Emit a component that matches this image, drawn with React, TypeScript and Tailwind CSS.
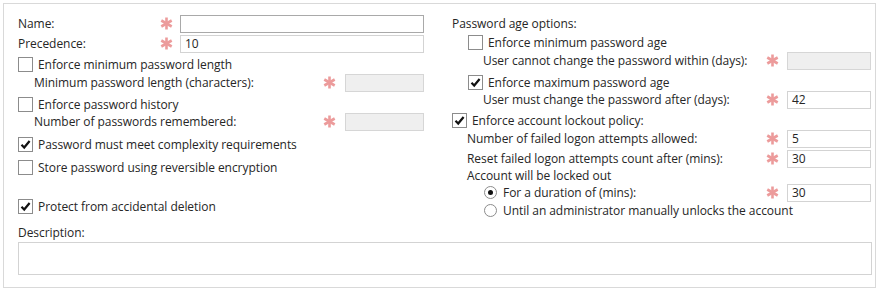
import React from "react";

const Ast = () => (
  <svg width="13" height="13" viewBox="0 0 13 13" className="shrink-0">
    <g stroke="#ec9b9b" strokeWidth="2.6" strokeLinecap="butt">
      <line x1="6.5" y1="0.5" x2="6.5" y2="12.5" />
      <line x1="1.3" y1="3.5" x2="11.7" y2="9.5" />
      <line x1="1.3" y1="9.5" x2="11.7" y2="3.5" />
    </g>
  </svg>
);

const Box = ({ checked }: { checked?: boolean }) => (
  <span className="w-[15px] h-[15px] shrink-0 border border-[#8c8c8c] bg-white flex items-center justify-center">
    {checked && (
      <svg width="13" height="13" viewBox="0 0 13 13">
        <path d="M2.5 6.8 L5.2 9.5 L10.6 3" fill="none" stroke="#111" strokeWidth="2.2" />
      </svg>
    )}
  </span>
);

const Radio = ({ checked }: { checked?: boolean }) => (
  <span className="w-[13px] h-[13px] shrink-0 rounded-full border border-[#8c8c8c] bg-white flex items-center justify-center">
    {checked && <span className="w-[5px] h-[5px] rounded-full bg-[#111]" />}
  </span>
);

const Input = ({
  value,
  disabled,
  dark,
  w,
}: {
  value?: string;
  disabled?: boolean;
  dark?: boolean;
  w: string;
}) => (
  <div
    className={`${w} h-[18px] shrink-0 border px-[4px] flex items-center text-[12px] leading-none ${
      disabled
        ? "bg-[#efefef] border-[#d6d6d6]"
        : dark
        ? "bg-white border-[#a9a9a9]"
        : "bg-white border-[#d3d3d3]"
    }`}
  >
    {value}
  </div>
);

export default function App() {
  return (
    <div className="w-[882px] h-[292px] bg-white pt-[3px] pl-[3px] font-['Open_Sans',sans-serif] text-[12px] tracking-[-0.05px] text-[#262626] leading-none">
      <div className="w-[873px] h-[285px] border border-[#d9d9d9] bg-white pt-[11px] pl-[14px] pr-[3px]">
        <div className="grid grid-cols-[406px_419px] gap-x-[28px] items-start">
          {/* Left column */}
          <div className="flex flex-col">
            <div className="h-[17px] flex items-center">
              <span className="flex-1">Name:</span>
              <Ast />
              <div className="ml-[7px]">
                <Input w="w-[244px]" dark />
              </div>
            </div>
            <div className="h-[17px] mt-[3px] flex items-center">
              <span className="flex-1">Precedence:</span>
              <Ast />
              <div className="ml-[7px]">
                <Input w="w-[244px]" value="10" />
              </div>
            </div>
            <div className="h-[17px] mt-[4px] flex items-center gap-[5px]">
              <Box />
              <span>Enforce minimum password length</span>
            </div>
            <div className="h-[17px] mt-[1px] pl-[16px] flex items-center">
              <span className="flex-1">Minimum password length (characters):</span>
              <Ast />
              <div className="ml-[9px]">
                <Input w="w-[79px]" disabled />
              </div>
            </div>
            <div className="h-[17px] mt-[5px] flex items-center gap-[5px]">
              <Box />
              <span>Enforce password history</span>
            </div>
            <div className="h-[17px] mt-[0px] pl-[16px] flex items-center">
              <span className="flex-1">Number of passwords remembered:</span>
              <Ast />
              <div className="ml-[9px]">
                <Input w="w-[79px]" disabled />
              </div>
            </div>
            <div className="h-[17px] mt-[6px] flex items-center gap-[5px]">
              <Box checked />
              <span>Password must meet complexity requirements</span>
            </div>
            <div className="h-[17px] mt-[6px] flex items-center gap-[5px]">
              <Box />
              <span>Store password using reversible encryption</span>
            </div>
            <div className="h-[17px] mt-[22px] flex items-center gap-[5px]">
              <Box checked />
              <span>Protect from accidental deletion</span>
            </div>
          </div>

          {/* Right column */}
          <div className="flex flex-col">
            <div className="h-[17px] flex items-center">Password age options:</div>
            <div className="h-[17px] mt-[2px] pl-[16px] flex items-center gap-[5px]">
              <Box />
              <span>Enforce minimum password age</span>
            </div>
            <div className="h-[17px] mt-[1px] pl-[31px] flex items-center">
              <span className="flex-1">User cannot change the password within (days):</span>
              <Ast />
              <div className="ml-[8px]">
                <Input w="w-[84px]" disabled />
              </div>
            </div>
            <div className="h-[17px] mt-[5px] pl-[16px] flex items-center gap-[5px]">
              <Box checked />
              <span>Enforce maximum password age</span>
            </div>
            <div className="h-[17px] mt-[0px] pl-[31px] flex items-center">
              <span className="flex-1">User must change the password after (days):</span>
              <Ast />
              <div className="ml-[8px]">
                <Input w="w-[84px]" value="42" />
              </div>
            </div>
            <div className="h-[17px] mt-[4px] flex items-center gap-[5px]">
              <Box checked />
              <span>Enforce account lockout policy:</span>
            </div>
            <div className="h-[17px] mt-[1px] pl-[15px] flex items-center">
              <span className="flex-1">Number of failed logon attempts allowed:</span>
              <Ast />
              <div className="ml-[8px]">
                <Input w="w-[84px]" value="5" />
              </div>
            </div>
            <div className="h-[17px] mt-[3px] pl-[15px] flex items-center">
              <span className="flex-1">Reset failed logon attempts count after (mins):</span>
              <Ast />
              <div className="ml-[8px]">
                <Input w="w-[84px]" value="30" />
              </div>
            </div>
            <div className="h-[17px] mt-[0px] pl-[15px] flex items-center">
              Account will be locked out
            </div>
            <div className="h-[17px] mt-[0px] pl-[32px] flex items-center">
              <Radio checked />
              <span className="flex-1 ml-[6px]">For a duration of (mins):</span>
              <Ast />
              <div className="ml-[8px]">
                <Input w="w-[84px]" value="30" />
              </div>
            </div>
            <div className="h-[17px] mt-[1px] pl-[32px] flex items-center">
              <Radio />
              <span className="ml-[6px]">Until an administrator manually unlocks the account</span>
            </div>
          </div>
        </div>

        <div className="h-[17px] mt-[5px] flex items-center">Description:</div>
        <div className="mt-[1px] h-[33px] border border-[#d3d3d3] bg-white" />
      </div>
    </div>
  );
}
